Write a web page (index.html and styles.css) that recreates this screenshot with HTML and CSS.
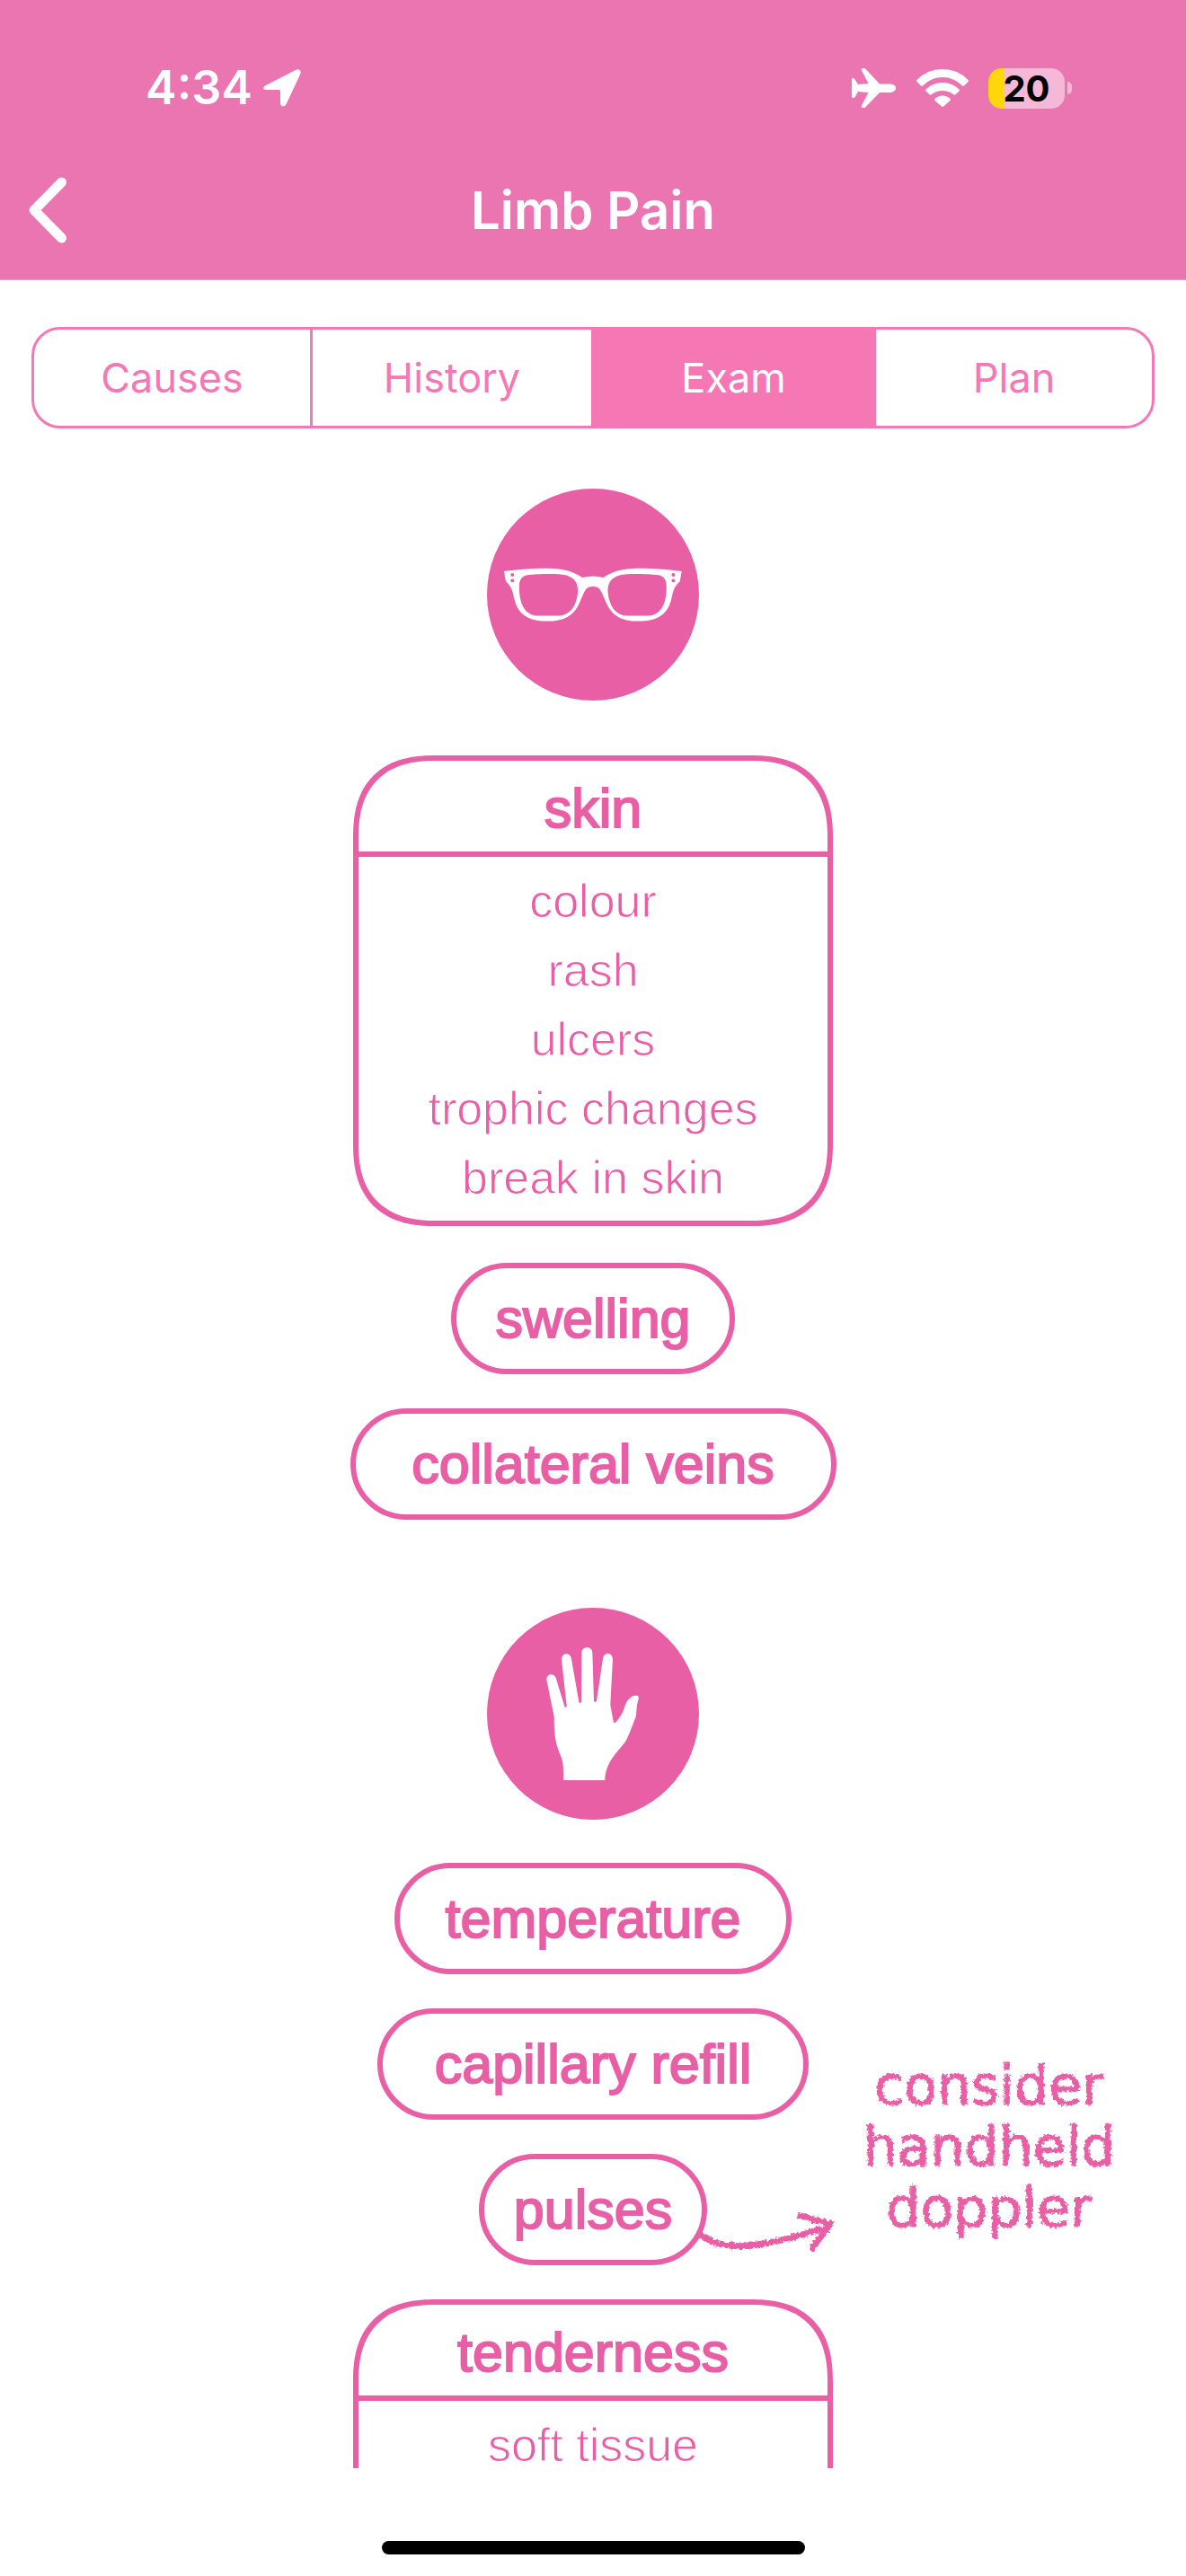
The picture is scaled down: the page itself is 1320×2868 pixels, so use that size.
FILE: index.html
```html
<!DOCTYPE html>
<html lang="en">
<head>
<meta charset="utf-8">
<meta name="viewport" content="width=device-width, initial-scale=1">
<title>Limb Pain</title>
<link rel="stylesheet" href="styles.css">
</head>
<body>
<div class="app">
  <header class="header">
    <div class="status">
      <div class="status-group">
        <span class="time">4:34</span>
        <svg class="icon-location" viewBox="0 0 42 42" aria-hidden="true"><path d="M36 1 L3 18 C-1 20 -1 23 3 23 L17 23 C18.500 23 19 23.500 19 25 L19 38 C19 42 24 42.500 25.500 39 L41 6 C43 2 40 -1 36 1Z"/></svg>
      </div>
      <div class="status-group status-right">
        <svg class="icon-plane" viewBox="0 0 50 44" aria-hidden="true"><path d="M0 11.500 Q0 11 1.500 11 L2.500 11.500 Q3.500 12 4.500 14 L7 18 L18.500 17 L10.500 1.500 Q10.500 0 12 0 L13.500 0 Q15 0 16 1.500 L31 17.500 L43 17.500 Q49 18 49 22 Q49 26 43 27 L31 27 L16 42.500 Q15 44 13.500 44 L12 44 Q10.500 44 10.500 42.500 L18.500 27 L7 26 L4.500 30.500 Q3.500 33 1.500 33 Q0 33 0 32Z"/></svg>
        <svg class="icon-wifi" viewBox="0 0 58 42" aria-hidden="true"><path d="M0.500 12 Q12 0 29 0 Q46 0 57.500 12 Q58.500 13 57.500 14 L53 18.500 Q52 19 51 18.500 Q42 9 29 9 Q16 9 7 18.500 Q6 19 5 18.500 L0.500 14 Q-.5 13 .500 12Z"/><path d="M10.500 22.500 Q18 15 29 15 Q40 15 47.500 22.500 Q48.500 23.500 47.500 24.500 L43 28.500 Q42 29 41 28 Q36 24 29 24 Q22 24 17 28 Q16 29 15 28.500 L10.500 24.500 Q9.500 23.500 10.500 22.500Z"/><path d="M20.500 33 Q24 29.500 29 29.500 Q34 29.500 37.500 33 Q38 34 37.500 35 L30 41.500 Q29 42 28 41.500 L20.500 35 Q20 34 20.500 33Z"/></svg>
        <div class="battery"><span class="battery-level">20</span></div>
      </div>
    </div>
    <div class="navbar">
      <button class="back" type="button" aria-label="Back">
        <svg viewBox="0 0 44 74" aria-hidden="true"><path d="M37.500 6 L7 37 L37.500 68"/></svg>
      </button>
      <h1 class="title">Limb Pain</h1>
    </div>
  </header>

  <nav class="tabs" aria-label="Sections">
    <button class="tab" type="button">Causes</button>
    <button class="tab" type="button">History</button>
    <button class="tab tab-active" type="button" aria-current="page">Exam</button>
    <button class="tab" type="button">Plan</button>
  </nav>

  <main class="content">
    <svg class="badge badge-look" viewBox="65 72 710 710" role="img" aria-label="Look">
      <circle class="badge-disc" cx="420" cy="427" r="355"/>
      <g id="frame-half">
        <path class="badge-shape" d="M122 349 C185 340 265 336 310 342 C345 347 365 357 384 370 C395 367 410 366 424 366 L424 400 C402 398 396 407 388 424 L374 456 C355 497 325 516 266 516 C200 516 168 492 156 440 C151 415 146 398 128 383Z"/>
        <path class="badge-disc" d="M205 361 C230 357 300 356 320 360 C360 367 371 390 369 420 C364 470 340 498 300 498 L240 498 C195 498 174 465 173 405 C172 375 182 364 205 361Z"/>
        <circle class="badge-disc" cx="150" cy="361" r="6"/>
        <circle class="badge-disc" cx="150" cy="380" r="6"/>
      </g>
      <use href="#frame-half" transform="translate(839 0) scale(-1 1)"/>
    </svg>

    <section class="card">
      <h2 class="card-title">skin</h2>
      <ul class="card-list">
        <li>colour</li>
        <li>rash</li>
        <li>ulcers</li>
        <li>trophic changes</li>
        <li>break in skin</li>
      </ul>
    </section>
    <div class="pill pill-m">swelling</div>
    <div class="pill pill-xxl">collateral veins</div>

    <svg class="badge badge-feel" viewBox="65 59 710 710" role="img" aria-label="Feel">
      <circle class="badge-disc" cx="420" cy="414" r="355"/>
      <path class="badge-shape" d="M321 637 C321 600 321 580 314 560 C300 525 289 500 290 425 L265 302 C263 278 292 276 297 298 L325 390 C326 394 332 393 332 389 L315 235 C314 206 345 206 348 232 L373 375 C374 379 380 379 381 375 L382 210 C382 186 418 186 418 210 L423 371 C424 375 431 375 432 371 L453 230 C456 206 486 206 486 232 L478 385 L489 443 C495 446 499 440 502 436 C515 418 520 410 524 396 C535 362 552 350 570 354 C577 358 569 375 567 388 C565 405 566 418 562 428 C548 462 540 488 528 508 C505 540 461 575 460 637Z"/>
    </svg>

    <div class="pill pill-l">temperature</div>
    <div class="pill pill-xl">capillary refill</div>
    <div class="annotated">
      <div class="pill pill-s">pulses</div>
      <svg class="arrow" viewBox="0 0 164 56" aria-hidden="true">
        <g filter="url(#chalk)"><path d="M8 29 Q30 46 66 42 Q100 38 142 24"/><path d="M121 9 L154 18 L134 45"/></g>
      </svg>
      <p class="note">consider handheld doppler</p>
    </div>
    <section class="card card-long">
      <h2 class="card-title">tenderness</h2>
      <ul class="card-list">
        <li>soft tissue</li>
      </ul>
    </section>
  </main>

  <footer class="home-area"><div class="home-bar"></div></footer>
</div>

<svg class="defs" width="0" height="0" aria-hidden="true">
  <filter id="chalk" x="-5%" y="-10%" width="110%" height="120%">
    <feTurbulence type="fractalNoise" baseFrequency="0.300" numOctaves="2" seed="4"/>
    <feDisplacementMap in="SourceGraphic" scale="6" xChannelSelector="R" yChannelSelector="G"/>
  </filter>
</svg>
</body>
</html>
```

FILE: styles.css
```css
* {
  box-sizing: border-box;
}

:root {
  --pink: #e85fa6;
  --header: #eb75b0;
  --tab: #f578b5;
}

body {
  margin: 0;
  background: #fff;
  color: var(--pink);
  font-family: "Liberation Sans", Arial, sans-serif;
}

h1, h2, ul, p {
  margin: 0;
  padding: 0;
}

button {
  font: inherit;
  border: 0;
  padding: 0;
  background: none;
  cursor: pointer;
}

.app {
  display: flex;
  flex-direction: column;
  height: 100vh;
}

/* Header */
.header {
  flex: none;
  background: var(--header);
  border-bottom: 1px solid #b9b4b7;
  color: #fff;
  font-family: Inter, sans-serif;
}

.status {
  display: flex;
  align-items: center;
  justify-content: space-between;
  height: 156px;
  padding: 40px 127px 0 162px;
}

.status-group {
  display: flex;
  align-items: center;
  gap: 12px;
}

.status-right {
  gap: 22px;
}

.status svg {
  fill: #fff;
}

.time {
  font-size: 52px;
  font-weight: 600;
  line-height: 64px;
}

.icon-location {
  width: 42px;
  height: 42px;
}

.icon-plane {
  width: 50px;
  height: 44px;
}

.icon-wifi {
  width: 58px;
  height: 42px;
}

.battery {
  display: flex;
  align-items: center;
  gap: 3px;
}

.battery-level {
  width: 85px;
  height: 45px;
  border-radius: 15px;
  background: linear-gradient(to right, #ffd60a 17px, #f5b9d7 17px);
  color: #000;
  font-size: 40px;
  font-weight: 700;
  line-height: 45px;
  text-align: center;
}

.battery::after {
  content: "";
  width: 5px;
  height: 14px;
  border-radius: 0 5px 5px 0;
  background: #f5b9d7;
}

.navbar {
  display: grid;
  grid-template-columns: 75px 1fr 75px;
  align-items: center;
  height: 155px;
}

.back {
  display: flex;
  justify-content: flex-end;
}

.back svg {
  width: 44px;
  height: 74px;
  fill: none;
  stroke: #fff;
  stroke-width: 11px;
  stroke-linecap: round;
  stroke-linejoin: round;
}

.title {
  font-size: 58px;
  font-weight: 600;
  line-height: 72px;
  text-align: center;
}

/* Segmented tabs */
.tabs {
  flex: none;
  display: grid;
  grid-template-columns: 307fr 313fr 314fr 310fr;
  height: 113px;
  margin: 52px 35px 0;
  border: 3px solid var(--tab);
  border-radius: 32px;
  overflow: hidden;
}

.tab {
  color: var(--tab);
  font-family: Inter, sans-serif;
  font-size: 45px;
}

.tab + .tab {
  border-left: 3px solid var(--tab);
}

.tab-active {
  background: var(--tab);
  color: #fff;
}

/* Scrolling content */
.content {
  flex: 1;
  min-height: 0;
  overflow: hidden auto;
  scrollbar-width: none;
  display: flex;
  flex-direction: column;
  align-items: center;
  gap: 38px;
}

.content > * {
  flex: none;
}

.badge {
  width: 236px;
  height: 236px;
}

.badge-look {
  margin: 67px 0 23px;
}

.badge-feel {
  margin: 60px 0 10px;
}

.badge-disc {
  fill: var(--pink);
}

.badge-shape {
  fill: #fff;
}

.card {
  width: 534px;
  margin-bottom: 3px;
  border: 6px solid var(--pink);
  border-radius: 78px;
}

@supports (corner-shape: superellipse(1.3)) {
  .card {
    border-radius: 92px;
    corner-shape: superellipse(1.3);
  }
}

.card-title {
  padding-top: 5px;
  border-bottom: 6px solid var(--pink);
  font-size: 61px;
  font-weight: 400;
  line-height: 96px;
  text-align: center;
  -webkit-text-stroke: 2px var(--pink);
}

.card-list {
  padding: 11px 0 9px;
  list-style: none;
  font-size: 52px;
  line-height: 77px;
  text-align: center;
  /* a background-coloured outline thins the strokes to a light weight */
  -webkit-text-stroke: 1px #fff;
}

.card-long {
  min-height: 420px;
}

.pill {
  height: 124px;
  border: 6px solid var(--pink);
  border-radius: 62px;
  font-size: 61px;
  line-height: 112px;
  text-align: center;
  white-space: nowrap;
  -webkit-text-stroke: 2px var(--pink);
}

.pill-s { width: 254px; }
.pill-m { width: 316px; }
.pill-l { width: 442px; }
.pill-xl { width: 480px; }
.pill-xxl { width: 541px; }

/* Pill with a handwritten remark beside it */
.annotated {
  position: relative;
}

.arrow {
  position: absolute;
  left: 237px;
  top: 60px;
  width: 164px;
  height: 56px;
  fill: none;
  stroke: var(--pink);
  stroke-width: 7px;
  stroke-linecap: round;
}

.note {
  position: absolute;
  left: 418px;
  top: -110px;
  width: 300px;
  font-family: Chalkduster, "DejaVu Sans", sans-serif;
  font-size: 60px;
  line-height: 68px;
  text-align: center;
  -webkit-text-stroke: 1px var(--pink);
  filter: url(#chalk);
}

/* Home indicator */
.home-area {
  flex: none;
  display: flex;
  justify-content: center;
  align-items: flex-end;
  height: 120px;
  padding-bottom: 24px;
}

.home-bar {
  width: 471px;
  height: 15px;
  border-radius: 8px;
  background: #000;
}

.defs {
  position: absolute;
}
```
